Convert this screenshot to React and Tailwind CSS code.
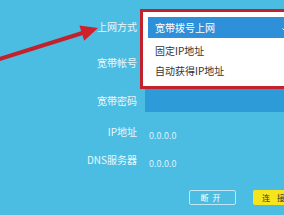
import React from 'react'

const font = { fontFamily: '"Noto Sans CJK SC", "Noto Sans", sans-serif' }

function Row({ label, height, children }) {
  return (
    <div className="flex items-center" style={{ height }}>
      <div className="w-[137px] shrink-0 text-right text-[10px] leading-none text-[#e9f7fc]">{label}</div>
      <div className="ml-[8px] flex-1">{children}</div>
    </div>
  )
}

export default function App() {
  return (
    <div className="relative w-[284px] h-[215px] overflow-hidden bg-[#4cbde2]" style={font}>
      <div className="flex flex-col pt-[9px]">
        <Row label="上网方式" height={36}>
          <div className="h-[21px] bg-[#2e9bd9]" />
        </Row>
        <Row label="宽带帐号" height={36}>
          <div className="h-[23px] bg-[#2e9bd9]" />
        </Row>
        <Row label="宽带密码" height={39}>
          <div className="h-[23px] bg-[#2e9bd9]" />
        </Row>
        <Row label="IP地址" height={24}>
          <span className="ml-[4px] text-[9px] leading-none text-[#dcf2fa]">0.0.0.0</span>
        </Row>
        <Row label="DNS服务器" height={32}>
          <span className="ml-[4px] text-[9px] leading-none text-[#dcf2fa]">0.0.0.0</span>
        </Row>
        <div className="flex gap-[17px] pl-[189px] pt-[14px]">
          <button className="w-[47px] h-[15px] shrink-0 rounded-[2px] border border-[#bfe7f6] text-[8px] leading-none tracking-[4px] text-white">
            断开
          </button>
          <button className="w-[48px] h-[15px] shrink-0 rounded-[2px] bg-[#f6e51c] text-[8px] leading-none tracking-[7px] text-[#333]">
            连接
          </button>
        </div>
      </div>

      {/* open dropdown list with red annotation frame */}
      <div className="absolute left-[140px] top-[9px] w-[160px] h-[80px] border-[3px] border-[#c3222c] bg-white">
        <div className="ml-[5px] mt-[5px] h-[21px] flex items-center bg-[#2d90d9] pl-[7px] text-[10px] leading-none text-white">
          宽带拨号上网
          <svg className="absolute left-[139px] top-[16px]" width="6" height="4" viewBox="0 0 6 4">
            <path d="M0.5 0.5 L3 3 L5.5 0.5" fill="none" stroke="#ffffff" strokeWidth="1" />
          </svg>
        </div>
        <div className="mt-[3px] h-[20px] flex items-center pl-[12px] text-[10px] leading-none text-[#333]">固定IP地址</div>
        <div className="h-[20px] flex items-center pl-[12px] text-[10px] leading-none text-[#333]">自动获得IP地址</div>
      </div>

      {/* red arrow annotation */}
      <svg className="absolute left-0 top-0" width="284" height="215" viewBox="0 0 284 215">
        <line x1="-2" y1="59.6" x2="84" y2="32.5" stroke="#c3222c" strokeWidth="4" />
        <polygon points="98,28 79.4,25.5 84.2,40.7" fill="#d0202a" />
      </svg>
    </div>
  )
}
